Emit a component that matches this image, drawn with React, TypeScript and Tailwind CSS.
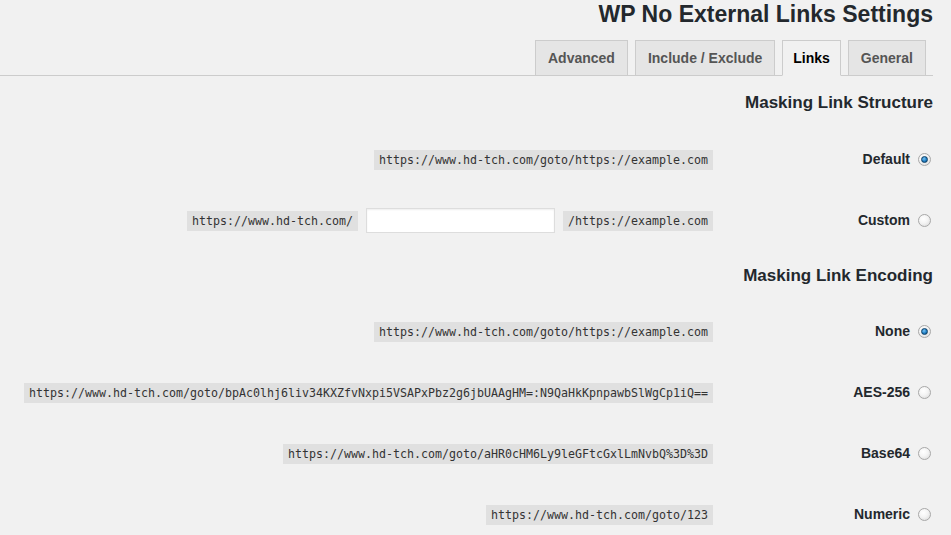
import React from "react";

const mono = { fontFamily: '"DejaVu Sans Mono", "Liberation Mono", monospace' };

function Code({ children }: { children: React.ReactNode }) {
  return (
    <code
      className="bg-[#e0e0e0] text-[#333] text-[11.63px] leading-[20px] h-[20px] px-[5px] whitespace-nowrap inline-block"
      style={mono}
    >
      {children}
    </code>
  );
}

function Radio({ checked }: { checked?: boolean }) {
  return (
    <span className="w-[13px] h-[13px] rounded-full border border-[#a8a8a8] bg-[radial-gradient(circle_at_40%_35%,#ffffff_0%,#f4f4f4_45%,#d6d6d6_100%)] flex items-center justify-center shrink-0">
      {checked && (
        <span className="w-[7px] h-[7px] rounded-full bg-[radial-gradient(circle_at_40%_35%,#7cc4f4_0%,#1f7fc4_55%,#0c4a7a_100%)] border border-[#0d3f66]" />
      )}
    </span>
  );
}

function Row({
  label,
  checked,
  children,
}: {
  label: string;
  checked?: boolean;
  children: React.ReactNode;
}) {
  return (
    <div className="h-[61px] flex items-center">
      <div className="flex-1 flex items-center justify-end gap-[8px]">{children}</div>
      <div className="w-[220px] flex items-center justify-end gap-[8px] pr-[2px]">
        <span className="text-[14px] font-bold text-[#23282d]">{label}</span>
        <Radio checked={checked} />
      </div>
    </div>
  );
}

function Tab({ label, active }: { label: string; active?: boolean }) {
  return (
    <div
      className={
        "h-[36px] border border-[#ccc] text-[14px] font-bold leading-[34px] " +
        (active
          ? "px-[10px] bg-[#f1f1f1] border-b-[#f1f1f1] text-black"
          : "px-[12px] bg-[#e5e5e5] text-[#555]")
      }
    >
      {label}
    </div>
  );
}

export default function App() {
  return (
    <div
      className="w-[951px] h-[535px] bg-[#f1f1f1] overflow-hidden"
      style={{ fontFamily: '"Liberation Sans", Arial, sans-serif' }}
    >
      <div className="mr-[18px]">
        <h1 className="text-[23px] font-bold leading-[29px] text-[#23282d] text-right">
          WP No External Links Settings
        </h1>
        <div className="mt-[11px] border-b border-[#ccc] flex justify-end gap-[7px] pr-[7px] h-[36px]">
          <Tab label="Advanced" />
          <Tab label="Include / Exclude" />
          <Tab label="Links" active />
          <Tab label="General" />
        </div>
        <h2 className="mt-[15px] text-[17px] font-bold leading-[24px] text-[#23282d] text-right">
          Masking Link Structure
        </h2>
        <div className="mt-[14px]">
          <Row label="Default" checked>
            <Code>https://www.hd-tch.com/goto/https://example.com</Code>
          </Row>
          <Row label="Custom">
            <Code>https://www.hd-tch.com/</Code>
            <input
              type="text"
              className="w-[189px] h-[25px] bg-white border border-[#ddd] shadow-[inset_0_1px_2px_rgba(0,0,0,0.07)] outline-none"
            />
            <Code>/https://example.com</Code>
          </Row>
        </div>
        <h2 className="mt-[13px] text-[17px] font-bold leading-[24px] text-[#23282d] text-right">
          Masking Link Encoding
        </h2>
        <div className="mt-[13px]">
          <Row label="None" checked>
            <Code>https://www.hd-tch.com/goto/https://example.com</Code>
          </Row>
          <Row label="AES-256">
            <Code>
              https://www.hd-tch.com/goto/bpAc0lhj6liv34KXZfvNxpi5VSAPxPbz2g6jbUAAgHM=:N9QaHkKpnpawbSlWgCp1iQ==
            </Code>
          </Row>
          <Row label="Base64">
            <Code>https://www.hd-tch.com/goto/aHR0cHM6Ly9leGFtcGxlLmNvbQ%3D%3D</Code>
          </Row>
          <Row label="Numeric">
            <Code>https://www.hd-tch.com/goto/123</Code>
          </Row>
        </div>
      </div>
    </div>
  );
}
